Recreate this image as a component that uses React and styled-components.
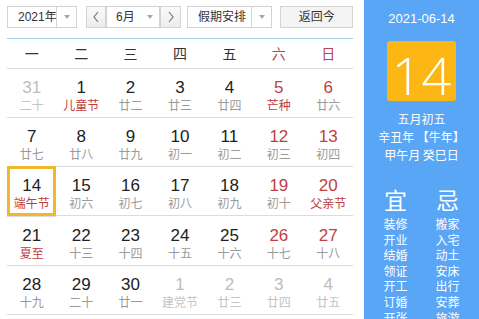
import styled, { createGlobalStyle, css } from "styled-components";

const Global = createGlobalStyle`
  html, body { margin: 0; padding: 0; background: #fff; }
  body { font-family: "Liberation Sans", "Noto Sans CJK SC", sans-serif; }
`;

const weekdays = ["一", "二", "三", "四", "五", "六", "日"];

const weeks = [
  [
    { d: 31, l: "二十", other: true },
    { d: 1, l: "儿童节", fest: true },
    { d: 2, l: "廿二" },
    { d: 3, l: "廿三" },
    { d: 4, l: "廿四" },
    { d: 5, l: "芒种", fest: true },
    { d: 6, l: "廿六" },
  ],
  [
    { d: 7, l: "廿七" },
    { d: 8, l: "廿八" },
    { d: 9, l: "廿九" },
    { d: 10, l: "初一" },
    { d: 11, l: "初二" },
    { d: 12, l: "初三" },
    { d: 13, l: "初四" },
  ],
  [
    { d: 14, l: "端午节", fest: true, selected: true },
    { d: 15, l: "初六" },
    { d: 16, l: "初七" },
    { d: 17, l: "初八" },
    { d: 18, l: "初九" },
    { d: 19, l: "初十" },
    { d: 20, l: "父亲节", fest: true },
  ],
  [
    { d: 21, l: "夏至", fest: true },
    { d: 22, l: "十三" },
    { d: 23, l: "十四" },
    { d: 24, l: "十五" },
    { d: 25, l: "十六" },
    { d: 26, l: "十七" },
    { d: 27, l: "十八" },
  ],
  [
    { d: 28, l: "十九" },
    { d: 29, l: "二十" },
    { d: 30, l: "廿一" },
    { d: 1, l: "建党节", other: true },
    { d: 2, l: "廿三", other: true },
    { d: 3, l: "廿四", other: true },
    { d: 4, l: "廿五", other: true },
  ],
];

const good = ["装修", "开业", "结婚", "领证", "开工", "订婚", "开张"];
const bad = ["搬家", "入宅", "动土", "安床", "出行", "安葬", "旅游"];

const Page = styled.div`
  display: flex;
  width: 479px;
  height: 319px;
  overflow: hidden;
`;

const Main = styled.div`
  width: 346px;
  padding: 6px 11px 0 7px;
`;

const Toolbar = styled.div`
  display: flex;
  height: 22px;
  margin-bottom: 10px;
  font-family: "Liberation Sans", "Noto Sans CJK SC", sans-serif;
  font-size: 12px;
  color: #333;
`;

const Select = styled.div`
  display: flex;
  box-sizing: border-box;
  width: ${(p) => p.$w}px;
  margin-right: ${(p) => p.$mr || 0}px;
  height: 22px;
  border: 1px solid #d3d3d3;
  background: #fff;
`;

const SelectText = styled.div`
  flex: 1;
  overflow: hidden;
  white-space: nowrap;
  line-height: 20px;
  padding-left: ${(p) => p.$pl}px;
`;

const Caret = styled.div`
  width: 19px;
  flex: none;
  display: flex;
  align-items: center;
  justify-content: center;
  ${(p) => p.$split && css`border-left: 1px solid #d3d3d3;`}
  &::after {
    content: "";
    border-left: 3px solid transparent;
    border-right: 3px solid transparent;
    border-top: 4px solid #a8a8a8;
  }
`;

const Group = styled.div`
  display: flex;
  margin-right: 6px;
`;

const StepButton = styled.div`
  box-sizing: border-box;
  width: ${(p) => p.$w}px;
  height: 22px;
  border: 1px solid #d3d3d3;
  background: linear-gradient(#fafafa, #ececec);
  display: flex;
  align-items: center;
  justify-content: center;
  color: #666;
`;

const TodayButton = styled.div`
  box-sizing: border-box;
  width: 73px;
  height: 22px;
  border: 1px solid #d3d3d3;
  background: #f4f4f4;
  text-align: center;
  line-height: 20px;
`;

const Grid = styled.div`
  display: grid;
  grid-template-columns: repeat(7, 1fr);
`;

const Head = styled.div`
  height: 29px;
  line-height: 29px;
  text-align: center;
  font-family: "Noto Sans CJK SC", sans-serif;
  font-size: 14px;
  color: ${(p) => (p.$weekend ? "#b84545" : "#333")};
  border-top: 1px solid #a9d0ea;
  border-bottom: 1px solid #dcdcdc;
`;

const Cell = styled.div`
  height: 49px;
  border-bottom: 1px solid #dcdcdc;
  text-align: center;
  padding-top: 10px;
  box-sizing: border-box;
  ${(p) => p.$selected && css`
    box-shadow: inset 0 0 0 3px #f1b82d;
    margin-top: -1px;
    height: 51px;
    padding-top: 11px;
  `}
`;

const Num = styled.div`
  font-size: 17px;
  line-height: 18px;
  height: 19px;
  color: ${(p) => (p.$other ? "#bdbdbd" : p.$weekend ? "#bf3f42" : "#222")};
`;

const Lunar = styled.div`
  font-family: "Noto Sans CJK SC", sans-serif;
  font-size: 12px;
  line-height: 14px;
  color: ${(p) => (p.$other ? "#c4c4c4" : p.$fest ? "#c03b3e" : "#9a9a9a")};
`;

const Side = styled.div`
  width: 115px;
  background: #59a6f6;
  color: #fff;
  font-family: "Noto Sans CJK SC", sans-serif;
  display: flex;
  flex-direction: column;
  align-items: center;
  padding-top: 10px;
  box-sizing: border-box;
`;

const DateLine = styled.div`
  font-family: "Liberation Sans", sans-serif;
  font-size: 13px;
  line-height: 18px;
`;

const DayBox = styled.div`
  width: 69px;
  height: 65px;
  margin-top: 13px;
  background: #fcb714;
  border-radius: 3px;
  display: flex;
  align-items: center;
  justify-content: center;
  font-family: "Open Sans", sans-serif;
  font-weight: 300;
  font-size: 52px;
  line-height: 1;
  padding-top: 8px;
  box-sizing: border-box;
`;

const LunarInfo = styled.div`
  margin-top: 9px;
  font-size: 12px;
  line-height: 18px;
  text-align: center;
  white-space: pre;
`;

const Divider = styled.div`
  width: 99px;
  height: 1px;
  margin-top: 9px;
  background: #a6cdf8;
`;

const Almanac = styled.div`
  display: flex;
  gap: 2px;
  margin-top: 11px;
`;

const Column = styled.div`
  width: 50px;
  display: flex;
  flex-direction: column;
  align-items: center;
`;

const Big = styled.div`
  font-size: 23px;
  line-height: 30px;
  margin-bottom: 2px;
`;

const Item = styled.div`
  font-size: 12px;
  line-height: 15.6px;
`;

const Chevron = ({ dir }) => (
  <svg width="8" height="12" viewBox="0 0 8 12">
    <polyline
      points={dir === "left" ? "6,1 2,6 6,11" : "2,1 6,6 2,11"}
      fill="none"
      stroke="#777"
      strokeWidth="1.2"
    />
  </svg>
);

export default function App() {
  return (
    <Page>
      <Global />
      <Main>
        <Toolbar>
          <Select $w={70} $mr={9}>
            <SelectText $pl={10}>2021年</SelectText>
            <Caret $split />
          </Select>
          <Group>
            <StepButton $w={20}>
              <Chevron dir="left" />
            </StepButton>
            <Select $w={54}>
              <SelectText $pl={9}>6月</SelectText>
              <Caret />
            </Select>
            <StepButton $w={21}>
              <Chevron dir="right" />
            </StepButton>
          </Group>
          <Select $w={86} $mr={8}>
            <SelectText $pl={10}>假期安排</SelectText>
            <Caret $split />
          </Select>
          <TodayButton>返回今</TodayButton>
        </Toolbar>
        <Grid>
          {weekdays.map((w, i) => (
            <Head key={w} $weekend={i >= 5}>
              {w}
            </Head>
          ))}
          {weeks.flatMap((row, r) =>
            row.map((c, i) => (
              <Cell key={`${r}-${i}`} $selected={c.selected}>
                <Num $other={c.other} $weekend={i >= 5}>
                  {c.d}
                </Num>
                <Lunar $other={c.other} $fest={c.fest}>
                  {c.l}
                </Lunar>
              </Cell>
            ))
          )}
        </Grid>
      </Main>
      <Side>
        <DateLine>2021-06-14</DateLine>
        <DayBox>14</DayBox>
        <LunarInfo>{"五月初五\n辛丑年 【牛年】\n甲午月 癸巳日"}</LunarInfo>
        <Divider />
        <Almanac>
          <Column>
            <Big>宜</Big>
            {good.map((g) => (
              <Item key={g}>{g}</Item>
            ))}
          </Column>
          <Column>
            <Big>忌</Big>
            {bad.map((b) => (
              <Item key={b}>{b}</Item>
            ))}
          </Column>
        </Almanac>
      </Side>
    </Page>
  );
}
